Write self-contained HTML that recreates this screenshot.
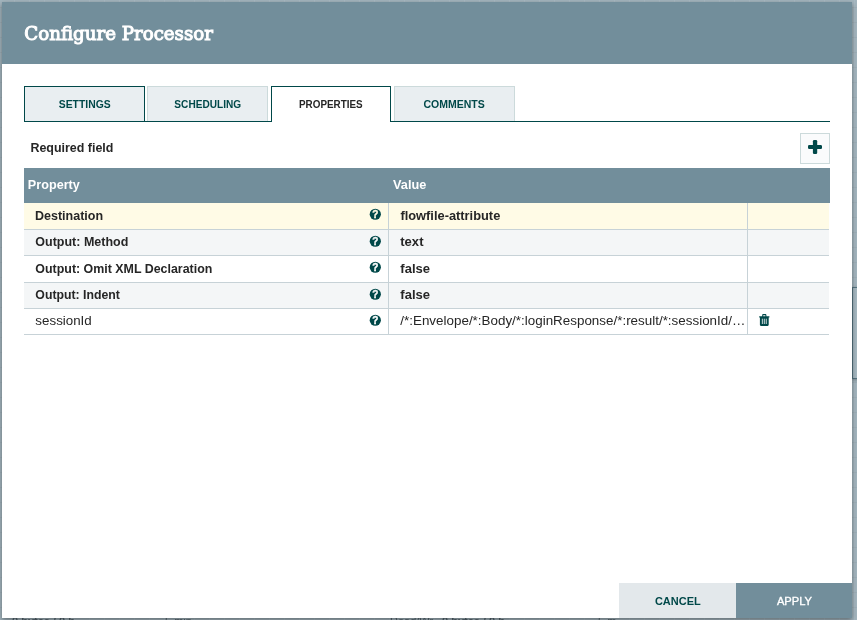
<!DOCTYPE html>
<html lang="en">
<head>
<meta charset="utf-8">
<title>Configure Processor</title>
<style>
*{box-sizing:border-box;margin:0;padding:0}
html,body{width:857px;height:620px;overflow:hidden}
body{position:relative;background:#a3b5be;font-family:"Liberation Sans",sans-serif;font-size:13px;color:#262626}
.a{position:absolute;white-space:nowrap}
.x{position:absolute;white-space:nowrap;transform-origin:0 0}
#page{left:0;top:0;width:857px;height:620px;will-change:transform;overflow:hidden}
#grid{left:0;top:0;width:857px;height:620px;background-color:#a3b5be;background-image:linear-gradient(to right,rgba(255,255,255,.07) 1px,transparent 1px),linear-gradient(to bottom,rgba(0,0,0,.04) 1px,transparent 1px);background-size:15px 15px;background-position:14px 7px}
#dialog{left:2px;top:2px;width:850px;height:616px;background:#fff;box-shadow:0 2px 5px rgba(0,0,0,.42)}
#hdr{left:2px;top:2px;width:850px;height:62px;background:#728e9b}
.tab{top:86px;height:36px;border:1px solid #ccdadb;border-bottom:none;background:#e9eef1}
.tab.hov{border-color:#004849}
.tab.sel{background:#fff;border-color:#004849}
#tabline{left:24px;top:121px;width:806px;height:1px;background:#004849}
#add{left:800px;top:133px;width:30px;height:31px;border:1px solid #ccdadb;background:#fafbfc}
#thead{left:24px;top:168px;width:806px;height:35px;background:#728e9b}
.row{left:24px;width:805px;border-bottom:1px solid #c7d2d7}
.vl{width:1px;background:#c7d2d7}
.q{width:11px;height:11px;border-radius:50%;background:#004849;font-size:9.5px;font-weight:bold;line-height:11px;text-align:center}
.btn{top:583px;height:35px}
.uf{top:614px;height:14px;font-size:11px;line-height:14px;color:#56666f;overflow:hidden}
#title{left:24px;top:21px;font:18.5px/26px "DejaVu Serif","Liberation Serif",serif;-webkit-text-stroke:1px #fff;color:#fff;transform:translateX(0.30px) scaleX(0.9842)}
#tab1{left:58px;top:97px;font:bold 11px/14px "Liberation Sans",sans-serif;color:#004849;transform:translateX(0.73px) scaleX(0.9434)}
#tab2{left:174px;top:97px;font:bold 11px/14px "Liberation Sans",sans-serif;color:#004849;transform:translateX(0.36px) scaleX(0.9173)}
#tab3{left:299px;top:97px;font:bold 11px/14px "Liberation Sans",sans-serif;color:#262626;transform:translateX(0.03px) scaleX(0.8961)}
#tab4{left:423px;top:97px;font:bold 11px/14px "Liberation Sans",sans-serif;color:#004849;transform:translateX(0.46px) scaleX(0.9550)}
#req{left:30px;top:140px;font:bold 13px/16px "Liberation Sans",sans-serif;color:#262626;transform:translateX(0.46px) scaleX(0.9568)}
#th1{left:27px;top:177px;font:bold 12.3px/16px "Liberation Sans",sans-serif;color:#fff;transform:translateX(0.85px) scaleX(1.0277)}
#th2{left:393px;top:177px;font:bold 12.3px/16px "Liberation Sans",sans-serif;color:#fff;transform:translateX(0.07px) scaleX(1.0340)}
#n1{left:34px;top:208px;font:bold 13.6px/16px "Liberation Sans",sans-serif;color:#262626;transform:translateX(0.99px) scaleX(0.9202)}
#v1{left:400px;top:208px;font:bold 13.6px/16px "Liberation Sans",sans-serif;color:#262626;transform:translateX(0.42px) scaleX(0.9445)}
#n2{left:35px;top:234px;font:bold 13.6px/16px "Liberation Sans",sans-serif;color:#262626;transform:translateX(0.34px) scaleX(0.9193)}
#v2{left:400px;top:234px;font:bold 13.6px/16px "Liberation Sans",sans-serif;color:#262626;transform:translateX(0.28px) scaleX(0.9592)}
#n3{left:35px;top:261px;font:bold 13.6px/16px "Liberation Sans",sans-serif;color:#262626;transform:translateX(0.34px) scaleX(0.9132)}
#v3{left:400px;top:261px;font:bold 13.6px/16px "Liberation Sans",sans-serif;color:#262626;transform:translateX(0.30px) scaleX(0.9589)}
#n4{left:35px;top:287px;font:bold 13.6px/16px "Liberation Sans",sans-serif;color:#262626;transform:translateX(0.35px) scaleX(0.9032)}
#v4{left:400px;top:287px;font:bold 13.6px/16px "Liberation Sans",sans-serif;color:#262626;transform:translateX(0.30px) scaleX(0.9589)}
#n5{left:35px;top:313px;font:13.6px/16px "Liberation Sans",sans-serif;color:#262626;transform:translateX(0.37px) scaleX(0.9813)}
#v5{left:400px;top:313px;font:13.6px/16px "Liberation Sans",sans-serif;color:#262626;transform:translateX(0.30px) scaleX(0.9863)}
#b1{left:654px;top:594px;font:bold 11.6px/14px "Liberation Sans",sans-serif;color:#004849;transform:translateX(0.91px) scaleX(0.9480)}
#b2{left:776px;top:594px;font:11px/14px "Liberation Sans",sans-serif;-webkit-text-stroke:.35px #fff;color:#fff;transform:translateX(0.88px) scaleX(1.0144)}
</style>
</head>
<body>
<div id="page" class="a">
<div id="grid" class="a"></div>
<div class="a" style="left:852px;top:287px;width:12px;height:92px;border:1px solid #557480;background:#a6b8c1;box-shadow:0 1px 3px rgba(0,0,0,.25)"></div>
<div class="a uf" style="left:12px;width:63px;font-weight:bold">0 bytes / 0 bytes</div>
<div class="a uf" style="left:165px;width:26px;font-weight:normal">5 min</div>
<div class="a uf" style="left:390px;width:44px;font-weight:normal">Read/Write</div>
<div class="a uf" style="left:442px;width:62px;font-weight:bold">0 bytes / 0 bytes</div>
<div class="a uf" style="left:598px;width:18px;font-weight:normal">5 min</div>
<div id="dialog" class="a"></div>
<div id="hdr" class="a"></div>
<div id="title" class="x">Configure Processor</div>
<div class="tab hov a" style="left:24px;width:121px"></div>
<div class="tab  a" style="left:147px;width:121px"></div>
<div class="tab sel a" style="left:271px;width:120px"></div>
<div class="tab  a" style="left:394px;width:121px"></div>
<div id="tabline" class="a"></div>
<div class="a" style="left:272px;top:121px;width:118px;height:1px;background:#fff"></div>
<div id="tab1" class="x">SETTINGS</div>
<div id="tab2" class="x">SCHEDULING</div>
<div id="tab3" class="x">PROPERTIES</div>
<div id="tab4" class="x">COMMENTS</div>
<div id="req" class="x">Required field</div>
<div id="add" class="a"><svg class="a" style="left:7px;top:6px" width="14" height="14" viewBox="0 0 14 14"><rect x="4.900" y="0" width="4.300" height="14" rx="1.300" fill="#004849"/><rect x="0" y="4.950" width="14.100" height="4.100" rx="1.300" fill="#004849"/></svg></div>
<div id="thead" class="a"></div>
<div id="th1" class="x">Property</div>
<div id="th2" class="x">Value</div>
<div class="row a" style="top:203px;height:27px;background:#fffbe6"></div>
<div class="vl a" style="left:388px;top:203px;height:27px"></div>
<div class="vl a" style="left:747px;top:203px;height:27px"></div>
<div id="n1" class="x">Destination</div>
<svg class="a" style="left:368px;top:207px" width="14" height="14" viewBox="0 0 14 14"><circle cx="7.3" cy="7.25" r="5.6" fill="#004849"/><text x="7.35" y="10.6" text-anchor="middle" font-family="Liberation Sans, sans-serif" font-weight="bold" font-size="10" fill="#fffbe6" stroke="#fffbe6" stroke-width=".4">?</text></svg>
<div id="v1" class="x">flowfile-attribute</div>
<div class="row a" style="top:230px;height:26px;background:#f4f6f7"></div>
<div class="vl a" style="left:388px;top:230px;height:26px"></div>
<div class="vl a" style="left:747px;top:230px;height:26px"></div>
<div id="n2" class="x">Output: Method</div>
<svg class="a" style="left:368px;top:234px" width="14" height="14" viewBox="0 0 14 14"><circle cx="7.3" cy="7.25" r="5.6" fill="#004849"/><text x="7.35" y="10.6" text-anchor="middle" font-family="Liberation Sans, sans-serif" font-weight="bold" font-size="10" fill="#f4f6f7" stroke="#f4f6f7" stroke-width=".4">?</text></svg>
<div id="v2" class="x">text</div>
<div class="row a" style="top:256px;height:27px;background:#ffffff"></div>
<div class="vl a" style="left:388px;top:256px;height:27px"></div>
<div class="vl a" style="left:747px;top:256px;height:27px"></div>
<div id="n3" class="x">Output: Omit XML Declaration</div>
<svg class="a" style="left:368px;top:260px" width="14" height="14" viewBox="0 0 14 14"><circle cx="7.3" cy="7.25" r="5.6" fill="#004849"/><text x="7.35" y="10.6" text-anchor="middle" font-family="Liberation Sans, sans-serif" font-weight="bold" font-size="10" fill="#ffffff" stroke="#ffffff" stroke-width=".4">?</text></svg>
<div id="v3" class="x">false</div>
<div class="row a" style="top:283px;height:26px;background:#f4f6f7"></div>
<div class="vl a" style="left:388px;top:283px;height:26px"></div>
<div class="vl a" style="left:747px;top:283px;height:26px"></div>
<div id="n4" class="x">Output: Indent</div>
<svg class="a" style="left:368px;top:287px" width="14" height="14" viewBox="0 0 14 14"><circle cx="7.3" cy="7.25" r="5.6" fill="#004849"/><text x="7.35" y="10.6" text-anchor="middle" font-family="Liberation Sans, sans-serif" font-weight="bold" font-size="10" fill="#f4f6f7" stroke="#f4f6f7" stroke-width=".4">?</text></svg>
<div id="v4" class="x">false</div>
<div class="row a" style="top:309px;height:26px;background:#ffffff"></div>
<div class="vl a" style="left:388px;top:309px;height:26px"></div>
<div class="vl a" style="left:747px;top:309px;height:26px"></div>
<div id="n5" class="x">sessionId</div>
<svg class="a" style="left:368px;top:313px" width="14" height="14" viewBox="0 0 14 14"><circle cx="7.3" cy="7.25" r="5.6" fill="#004849"/><text x="7.35" y="10.6" text-anchor="middle" font-family="Liberation Sans, sans-serif" font-weight="bold" font-size="10" fill="#ffffff" stroke="#ffffff" stroke-width=".4">?</text></svg>
<div id="v5" class="x">/*:Envelope/*:Body/*:loginResponse/*:result/*:sessionId/…</div>
<svg class="a" style="left:758px;top:313px" width="13" height="14" viewBox="0 0 13 14"><path d="M1.200 3.150h10.200v1.300h-.700v7.400c0 .600-.450 1.050-1.050 1.050h-6.700c-.600 0-1.050-.450-1.050-1.050v-7.400h-.700zM4.200 3.150v-.950c0-.650.450-1.100 1.100-1.100h2c.650 0 1.100.450 1.100 1.100v.950h-1.050v-.850h-2.100v.850z" fill="#004849"/><path d="M4.350 5.700v5.300M6.300 5.700v5.300M8.250 5.700v5.300" stroke="#fff" stroke-width=".8" fill="none"/></svg>
<div class="btn a" style="left:619px;width:117px;background:#e3e8eb"></div>
<div class="btn a" style="left:736px;width:116px;background:#728e9b"></div>
<div id="b1" class="x">CANCEL</div>
<div id="b2" class="x">APPLY</div>
</div>
</body>
</html>
